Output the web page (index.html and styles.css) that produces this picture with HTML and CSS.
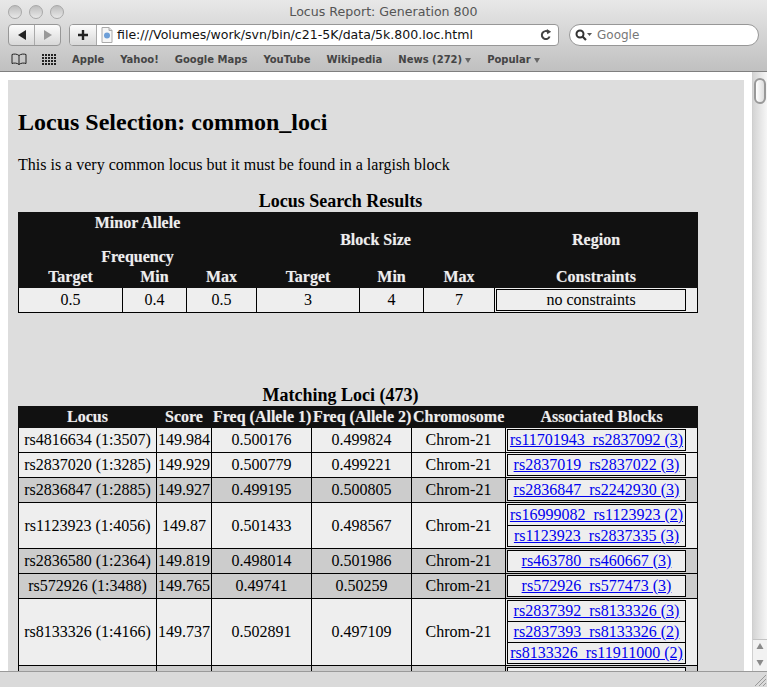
FILE: index.html
```html
<!DOCTYPE html>
<html>

<head>
    <meta charset="utf-8">
    <title>Locus Report: Generation 800</title>
    <link rel="stylesheet" href="styles.css">
</head>

<body>
    <div class="window">
        <header class="chrome">
            <div class="titlebar">
                <div class="lights"><span></span><span></span><span></span></div>
                <div class="title">Locus Report: Generation 800</div>
            </div>
            <div class="toolbar">
                <div class="navbtns">
                    <span class="navbtn"><svg width="10" height="10" viewBox="0 0 10 10"><path d="M9 0v10L1 5z" fill="#222"/></svg></span>
                    <span class="navbtn"><svg width="10" height="10" viewBox="0 0 10 10"><path d="M1 0v10l8-5z" fill="#999"/></svg></span>
                </div>
                <div class="address">
                    <span class="addbtn"><svg width="12" height="12" viewBox="0 0 12 12"><path d="M6 1v10M1 6h10" stroke="#222" stroke-width="2.4"/></svg></span>
                    <svg class="fileicon" width="12" height="16" viewBox="0 0 12 16"><path d="M1 .5h7l3 3v12H1z" fill="#f6f6f6" stroke="#aaa"/><path d="M8 .5v3h3" fill="#ddd" stroke="#aaa"/><circle cx="6" cy="8.500" r="3" fill="#6d9fd8"/></svg>
                    <span class="url">file:///Volumes/work/svn/bin/c21-5K/data/5k.800.loc.html</span>
                    <svg class="reload" width="12" height="12" viewBox="0 0 12 12"><path d="M9.600 7.500A4 4 0 1 1 8.400 3" fill="none" stroke="#444" stroke-width="2"/><path d="M6.800 0l4.400 2.800-4 2.400z" fill="#444"/></svg>
                </div>
                <div class="search">
                    <svg width="20" height="12" viewBox="0 0 20 12"><circle cx="5" cy="5" r="3.500" fill="none" stroke="#333" stroke-width="2"/><path d="M7.500 7.500L11 11" stroke="#333" stroke-width="2.200"/><path d="M12 4h5l-2.500 3z" fill="#555"/></svg>
                    <span>Google</span>
                </div>
            </div>
            <nav class="bookmarks">
                <svg class="bookicon" width="16" height="12" viewBox="0 0 16 12"><path d="M8 2.500C6 .8 3 .8 1 1.500v9c2-.7 5-.7 7 1 2-1.700 5-1.700 7-1v-9C13 .8 10 .8 8 2.500zM8 2.500v9" fill="none" stroke="#222"/></svg>
                <span class="grid"><i></i><i></i><i></i><i></i><i></i><i></i><i></i><i></i><i></i><i></i><i></i><i></i><i></i><i></i><i></i><i></i><i></i><i></i><i></i><i></i></span>
                <a>Apple</a>
                <a>Yahoo!</a>
                <a>Google Maps</a>
                <a>YouTube</a>
                <a>Wikipedia</a>
                <a>News (272)<b></b></a>
                <a>Popular<b></b></a>
            </nav>
        </header>

        <div class="viewport">
            <div class="page">
                <main class="content">
                    <h2>Locus Selection: common_loci</h2>
                    <p>This is a very common locus but it must be found in a largish block</p>

                    <table class="report search-results">
                        <caption>Locus Search Results</caption>
                        <colgroup>
                            <col class="c1"><col class="c2"><col class="c3"><col class="c4"><col class="c5"><col class="c6"><col class="c7">
                        </colgroup>
                        <thead>
                            <tr>
                                <th colspan="3">Minor Allele<p>Frequency</p></th>
                                <th colspan="3">Block Size</th>
                                <th>Region</th>
                            </tr>
                            <tr class="sub">
                                <th>Target</th><th>Min</th><th>Max</th>
                                <th>Target</th><th>Min</th><th>Max</th>
                                <th>Constraints</th>
                            </tr>
                        </thead>
                        <tbody>
                            <tr>
                                <td>0.5</td><td>0.4</td><td>0.5</td><td>3</td><td>4</td><td>7</td>
                                <td class="blocks"><table class="inner"><tr><td>no constraints</td></tr></table></td>
                            </tr>
                        </tbody>
                    </table>

                    <table class="report loci">
                        <caption>Matching Loci (473)</caption>
                        <colgroup>
                            <col class="l1"><col class="l2"><col class="l3"><col class="l4"><col class="l5"><col class="l6">
                        </colgroup>
                        <thead>
                            <tr>
                                <th>Locus</th><th>Score</th><th>Freq (Allele 1)</th><th>Freq (Allele 2)</th><th>Chromosome</th><th>Associated Blocks</th>
                            </tr>
                        </thead>
                        <tbody>
                            <tr>
                                <td>rs4816634 (1:3507)</td><td>149.984</td><td>0.500176</td><td>0.499824</td><td>Chrom-21</td>
                                <td class="blocks"><table class="inner"><tr><td><a href="#">rs11701943_rs2837092 (3)</a></td></tr></table></td>
                            </tr>
                            <tr>
                                <td>rs2837020 (1:3285)</td><td>149.929</td><td>0.500779</td><td>0.499221</td><td>Chrom-21</td>
                                <td class="blocks"><table class="inner"><tr><td><a href="#">rs2837019_rs2837022 (3)</a></td></tr></table></td>
                            </tr>
                            <tr class="alt">
                                <td>rs2836847 (1:2885)</td><td>149.927</td><td>0.499195</td><td>0.500805</td><td>Chrom-21</td>
                                <td class="blocks"><table class="inner"><tr><td><a href="#">rs2836847_rs2242930 (3)</a></td></tr></table></td>
                            </tr>
                            <tr>
                                <td>rs1123923 (1:4056)</td><td>149.87</td><td>0.501433</td><td>0.498567</td><td>Chrom-21</td>
                                <td class="blocks"><table class="inner"><tr><td><a href="#">rs16999082_rs1123923 (2)</a></td></tr><tr><td><a href="#">rs1123923_rs2837335 (3)</a></td></tr></table></td>
                            </tr>
                            <tr class="alt">
                                <td>rs2836580 (1:2364)</td><td>149.819</td><td>0.498014</td><td>0.501986</td><td>Chrom-21</td>
                                <td class="blocks"><table class="inner"><tr><td><a href="#">rs463780_rs460667 (3)</a></td></tr></table></td>
                            </tr>
                            <tr class="alt">
                                <td>rs572926 (1:3488)</td><td>149.765</td><td>0.49741</td><td>0.50259</td><td>Chrom-21</td>
                                <td class="blocks"><table class="inner"><tr><td><a href="#">rs572926_rs577473 (3)</a></td></tr></table></td>
                            </tr>
                            <tr>
                                <td>rs8133326 (1:4166)</td><td>149.737</td><td>0.502891</td><td>0.497109</td><td>Chrom-21</td>
                                <td class="blocks"><table class="inner"><tr><td><a href="#">rs2837392_rs8133326 (3)</a></td></tr><tr><td><a href="#">rs2837393_rs8133326 (2)</a></td></tr><tr><td><a href="#">rs8133326_rs11911000 (2)</a></td></tr></table></td>
                            </tr>
                            <tr class="alt">
                                <td>&nbsp;</td><td></td><td></td><td></td><td></td>
                                <td class="blocks"><table class="inner"><tr><td>&nbsp;</td></tr></table></td>
                            </tr>
                        </tbody>
                    </table>
                </main>
            </div>
            <aside class="scrollbar">
                <div class="thumb"></div>
                <div class="arrows">
                    <svg width="14" height="15" viewBox="0 0 14 15"><path d="M7 3l3.500 6h-7z" fill="#8a8a8a"/></svg>
                    <svg width="14" height="15" viewBox="0 0 14 15"><path d="M7 11L3.500 5h7z" fill="#8a8a8a"/></svg>
                </div>
            </aside>
        </div>

        <footer class="statusbar">
            <svg width="14" height="14" viewBox="0 0 14 14"><path d="M13 2L2 13M13 6l-7 7M13 10l-3 3" stroke="#999" fill="none"/></svg>
        </footer>
    </div>
</body>

</html>
```

FILE: styles.css
```css
* {
    box-sizing: border-box;
}

html,
body {
    margin: 0;
    height: 100%;
    overflow: hidden;
    background-color: white;
}

.window {
    display: flex;
    flex-direction: column;
    height: 687px;
    width: 767px;
}

/* browser chrome */
.chrome {
    height: 72px;
    flex: none;
    background: linear-gradient(#e8e8e8, #c0c0c0);
    border-bottom: 1px solid #7f7f7f;
    font-family: 'DejaVu Sans', sans-serif;
}

.titlebar {
    display: flex;
    align-items: center;
    height: 23px;
    padding-left: 8px;
}

.lights {
    display: flex;
    gap: 7px;
}

.lights span {
    width: 14px;
    height: 14px;
    border-radius: 50%;
    background: linear-gradient(#bdbdbd, #e8e8e8);
    border: 1px solid #a8a8a8;
}

.title {
    flex: 1;
    text-align: center;
    font-size: 12.600px;
    color: #555;
    padding-right: 64px;
}

.toolbar {
    display: flex;
    align-items: center;
    height: 23px;
    padding-left: 8px;
}

.navbtns {
    display: flex;
    height: 22px;
    width: 53px;
    background: linear-gradient(#fcfcfc, #d8d8d8);
    border: 1px solid #979797;
    border-radius: 4px;
}

.navbtn {
    flex: 1;
    display: flex;
    align-items: center;
    justify-content: center;
}

.navbtn + .navbtn {
    border-left: 1px solid #aaa;
}

.address {
    display: flex;
    align-items: center;
    height: 22px;
    width: 490px;
    margin-left: 8px;
    background: white;
    border: 1px solid #979797;
    border-radius: 4px;
    overflow: hidden;
}

.addbtn {
    width: 27px;
    height: 100%;
    display: flex;
    align-items: center;
    justify-content: center;
    background: linear-gradient(#fcfcfc, #d8d8d8);
    border-right: 1px solid #aaa;
    flex: none;
}

.fileicon {
    margin-left: 4px;
    flex: none;
}

.url {
    flex: 1;
    margin-left: 4px;
    font-size: 12.550px;
    color: #111;
    white-space: nowrap;
}

.reload {
    margin-right: 6px;
    flex: none;
}

.search {
    display: flex;
    align-items: center;
    gap: 2px;
    height: 22px;
    width: 190px;
    margin-left: 10px;
    padding-left: 5px;
    background: white;
    border: 1px solid #979797;
    border-radius: 11px;
    font-size: 12px;
    color: #777;
}

.bookmarks {
    display: flex;
    align-items: center;
    height: 25px;
    padding: 1px 0 0 11px;
    font-size: 10px;
    font-weight: bold;
    color: #444;
}

.bookicon {
    flex: none;
}

.grid {
    display: grid;
    grid-template-columns: repeat(5, 2px);
    gap: 1px;
    margin-left: 15px;
    margin-right: 16px;
}

.grid i {
    width: 2px;
    height: 2px;
    background-color: #222;
}

.bookmarks a {
    margin-right: 16px;
    white-space: nowrap;
}

.bookmarks b {
    display: inline-block;
    margin-left: 3px;
    border-left: 3px solid transparent;
    border-right: 3px solid transparent;
    border-top: 5px solid #666;
}

/* page area */
.viewport {
    flex: 1;
    min-height: 0;
    display: flex;
    overflow: hidden;
}

.page {
    flex: 1;
    padding: 8px;
    min-width: 0;
}

.content {
    background-color: #ddd;
    padding: 10px;
    height: 900px;
    font-family: 'Liberation Serif', 'Times New Roman', serif;
    font-size: 16px;
    color: black;
}

h2 {
    font-size: 24px;
    margin: 19px 0 20px;
    line-height: 27px;
}

.content > p {
    margin: 0 0 17px;
    line-height: 18px;
}

table.report {
    border-collapse: collapse;
    table-layout: fixed;
    width: 679px;
    text-align: center;
}

.report caption {
    font-weight: bold;
    font-size: 18px;
    line-height: 21px;
    padding-right: 35px;
}

.report th {
    background-color: #111;
    color: #eee;
    padding: 1px;
    line-height: 18px;
    border: 1px solid #111;
    white-space: nowrap;
    text-shadow: 0 0 1px rgba(255, 255, 255, .4);
}

.report th p {
    margin: 16px 0 0;
}

.report .sub th {
    padding-top: 0;
}

.report td {
    background-color: #eee;
    border: 1px solid black;
    padding: 1px;
    line-height: 18px;
    white-space: nowrap;
}

.report tr.alt > td {
    background-color: #ccc;
}

.search-results {
    margin-bottom: 72px;
}

.c1 { width: 104px; }
.c2 { width: 64px; }
.c3 { width: 70px; }
.c4 { width: 103px; }
.c5 { width: 64px; }
.c6 { width: 71px; }
.c7 { width: 203px; }

.l1 { width: 138px; }
.l2 { width: 55px; }
.l3 { width: 100px; }
.l4 { width: 100px; }
.l5 { width: 94px; }
.l6 { width: 192px; }

table.inner {
    border-collapse: collapse;
    width: 179px;
}

.report tr.alt table.inner td,
table.inner td {
    background-color: #eee;
    border: 1px solid black;
    padding: 1px;
    text-align: center;
}

.search-results table.inner {
    width: 190px;
}

table.inner a {
    color: #00e;
    text-decoration: underline;
}

/* scrollbar and status bar */
.scrollbar {
    flex: none;
    width: 15px;
    display: flex;
    flex-direction: column;
    justify-content: space-between;
    background: linear-gradient(to right, #d4d4d4, #f6f6f6);
    border-left: 1px solid #cfcfcf;
}

.thumb {
    height: 26px;
    margin: 6px 0 0 1px;
    width: 12px;
    background: linear-gradient(to right, #fff, #ddd);
    border: 2px solid #999;
    border-radius: 6px;
}

.arrows {
    display: flex;
    flex-direction: column;
    padding-bottom: 1px;
    background-color: #f2f2f2;
    border-top: 1px solid #c4c4c4;
}

.statusbar {
    flex: none;
    height: 16px;
    display: flex;
    justify-content: flex-end;
    align-items: flex-end;
    background-color: #dadada;
    border-top: 1px solid #9a9a9a;
}
```
